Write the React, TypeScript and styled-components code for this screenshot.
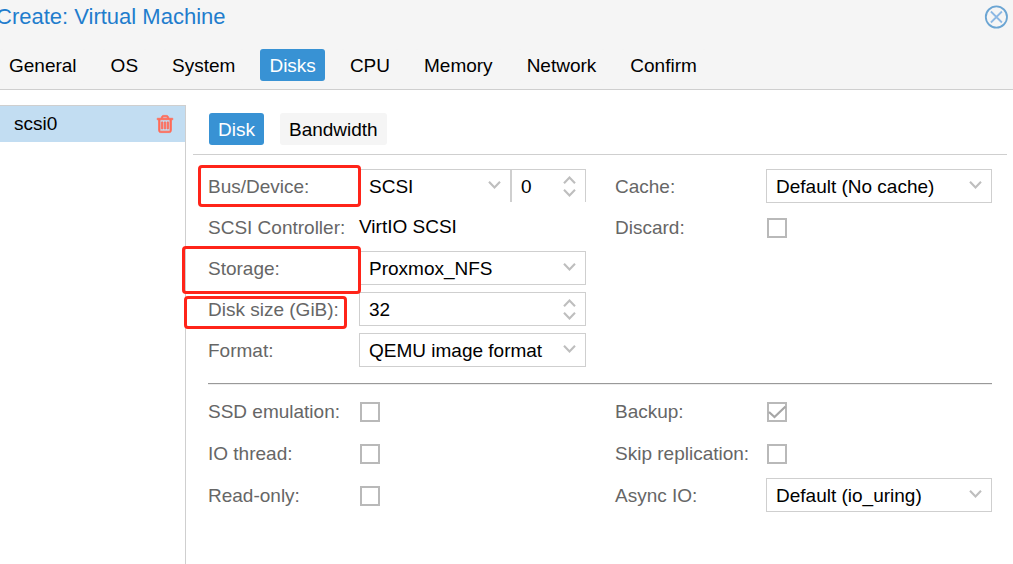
import React, { useState } from 'react';
import styled, { createGlobalStyle, css } from 'styled-components';

const GlobalStyle = createGlobalStyle`
  *, *::before, *::after { box-sizing: border-box; }
  html, body, #root { height: 100%; }
  body {
    margin: 0;
    background: #fff;
    color: #000;
    font: 19px/24px "Liberation Sans", Arial, sans-serif;
    overflow-x: hidden;
  }
  button, input, select { font: inherit; color: inherit; }
`;

const Dialog = styled.main`
  display: flex;
  flex-direction: column;
  min-height: 100%;
  overflow: hidden;
`;

const Header = styled.header`
  background: #f5f5f5;
  border-bottom: 1px solid #cfcfcf;
  padding-bottom: 8px;
`;

const TitleBar = styled.div`
  display: flex;
  align-items: center;
  justify-content: space-between;
  height: 33px;
  padding-right: 5px;
  margin-bottom: 16px;
`;

const Title = styled.h1`
  margin: 0 0 0 -4px;
  font-size: 22px;
  font-weight: 400;
  color: #1f7dcd;
  white-space: nowrap;
`;

const IconButton = styled.button`
  display: flex;
  padding: 0;
  border: 0;
  background: none;
  cursor: pointer;
`;

const TabBar = styled.nav<{ $nested?: boolean }>`
  display: flex;
  gap: 16px;
  ${(p) =>
    p.$nested &&
    css`
      padding: 8px 16px 9px;
      border-bottom: 1px solid #cfcfcf;
    `}
`;

const Tab = styled.button<{ $active?: boolean }>`
  height: 32px;
  padding: 2px 9px 0;
  border: 0;
  border-radius: 3px;
  white-space: nowrap;
  cursor: pointer;
  background: ${(p) => (p.$active ? '#3892d4' : '#f5f5f5')};
  color: ${(p) => (p.$active ? '#fff' : '#000')};
`;

const Body = styled.div`
  display: flex;
  flex: 1;
  padding-top: 15px;
`;

const DiskList = styled.ul`
  flex: 0 0 186px;
  margin: 0;
  padding: 0;
  list-style: none;
  border-top: 1px solid #cfcfcf;
  border-right: 1px solid #cfcfcf;
`;

const DiskItem = styled.li`
  display: flex;
  align-items: center;
  justify-content: space-between;
  height: 36px;
  padding: 0 10px 0 14px;
  background: #c2ddf2;
`;

const Pane = styled.section`
  flex: 1;
  min-width: 0;
  margin: 0 6px 0 7px;
`;

const Form = styled.form`
  padding: 14px 15px;
`;

const Columns = styled.div`
  display: grid;
  grid-template-columns: 378fr 377fr;
  gap: 29px;
`;

const Column = styled.div<{ $gap: number }>`
  display: flex;
  flex-direction: column;
  gap: ${(p) => p.$gap}px;
`;

const Row = styled.div`
  display: grid;
  grid-template-columns: 151px 1fr;
  height: 34px;
`;

const LabelCell = styled.div`
  position: relative;
  display: flex;
  align-items: center;
  padding-top: 2px;
  color: #666;
  white-space: nowrap;
`;

const Highlight = styled.span<{ $inset: string }>`
  position: absolute;
  z-index: 1;
  inset: ${(p) => p.$inset};
  border: 3px solid #ff2419;
  border-radius: 4px;
  pointer-events: none;
`;

const Value = styled.output`
  align-self: center;
`;

const Divider = styled.hr`
  height: 2px;
  margin: 16px 0 9px;
  border: 0;
  border-top: 1px solid #999;
  border-bottom: 1px solid #eee;
`;

const FieldBox = styled.div<{ $cut?: boolean }>`
  display: grid;
  grid-template-columns: 1fr 31px;
  min-width: 0;
  border: 1px solid #cfcfcf;
  background: #fff;
  ${(p) =>
    p.$cut &&
    css`
      border-bottom: 0;
      margin-bottom: 1px;
    `}
`;

const SplitField = styled.div`
  display: grid;
  grid-template-columns: 1fr 75px;
`;

const fieldText = css`
  appearance: none;
  min-width: 0;
  width: 100%;
  padding: 1px 0 0 9px;
  border: 0;
  border-radius: 0;
  outline: 0;
  background: transparent;
`;

const NativeSelect = styled.select`
  ${fieldText}
  grid-area: 1 / 1 / 2 / 3;
`;

const SelectArrow = styled.span`
  grid-area: 1 / 2;
  display: flex;
  align-items: center;
  justify-content: center;
  padding: 0 0 2px;
  pointer-events: none;
`;

const NumberInput = styled.input`
  ${fieldText}
  -moz-appearance: textfield;
  &::-webkit-inner-spin-button { appearance: none; margin: 0; }
`;

const Spinner = styled.div`
  display: flex;
  flex-direction: column;
  align-items: center;
  justify-content: center;
  gap: 5px;
`;

const CheckWrap = styled.span`
  display: grid;
  align-self: center;
  width: 20px;
  height: 20px;
  margin: 2px 0 0 1px;
  & > * { grid-area: 1 / 1; }
  & > svg { pointer-events: none; visibility: hidden; }
  & > input:checked + svg { visibility: visible; }
`;

const CheckInput = styled.input`
  appearance: none;
  width: 20px;
  height: 20px;
  margin: 0;
  border: 2px solid #b9b9b9;
  background: #fff;
`;

const Chevron = ({ up }: { up?: boolean }) => (
  <svg width="13" height="8" viewBox="0 0 13 8" fill="none" stroke="#bebebe" strokeWidth="2.1" aria-hidden="true">
    <path d={up ? 'M1 7.2l5.5-5.7L12 7.2' : 'M1 .8l5.5 5.7L12 .8'} />
  </svg>
);

const CloseIcon = () => (
  <svg width="24" height="24" viewBox="0 0 24 24" fill="none" aria-hidden="true">
    <circle cx="12.4" cy="12" r="10.6" stroke="#6ba5d3" strokeWidth="1.8" />
    <path d="M6.9 6.5l11 11M17.9 6.5l-11 11" stroke="#8cb8e4" strokeWidth="1.8" />
  </svg>
);

const TrashIcon = () => (
  <svg
    width="20"
    height="20"
    viewBox="0 0 1792 1792"
    fill="#ff6c59"
    stroke="#ff6c59"
    strokeWidth="70"
    aria-hidden="true"
  >
    <path d="M704 736v576q0 14-9 23t-23 9h-64q-14 0-23-9t-9-23v-576q0-14 9-23t23-9h64q14 0 23 9t9 23zm256 0v576q0 14-9 23t-23 9h-64q-14 0-23-9t-9-23v-576q0-14 9-23t23-9h64q14 0 23 9t9 23zm256 0v576q0 14-9 23t-23 9h-64q-14 0-23-9t-9-23v-576q0-14 9-23t23-9h64q14 0 23 9t9 23zm128 724v-948h-896v948q0 22 7 40.5t14.5 27 10.5 8.5h832q3 0 10.5-8.5t14.5-27 7-40.5zm-672-1076h448l-48-117q-7-9-17-11h-317q-10 2-17 11zm928 32v64q0 14-9 23t-23 9h-96v948q0 83-47 143.5t-113 60.5h-832q-66 0-113-58.5t-47-141.5v-952h-96q-14 0-23-9t-9-23v-64q0-14 9-23t23-9h309l70-167q15-37 54-63t79-26h320q40 0 79 26t54 63l70 167h309q14 0 23 9t9 23z" />
  </svg>
);

type FieldProps = { id: string; label: string; mark?: string; children: React.ReactNode };

const Field = ({ id, label, mark, children }: FieldProps) => (
  <Row>
    <LabelCell>
      <label htmlFor={id}>{label}</label>
      {mark && <Highlight $inset={mark} />}
    </LabelCell>
    {children}
  </Row>
);

const Select = ({ id, options, cut }: { id: string; options: string[]; cut?: boolean }) => (
  <FieldBox $cut={cut}>
    <NativeSelect id={id}>
      {options.map((o) => (
        <option key={o}>{o}</option>
      ))}
    </NativeSelect>
    <SelectArrow>
      <Chevron />
    </SelectArrow>
  </FieldBox>
);

const NumberField = ({ id, initial, cut, name }: { id: string; initial: number; cut?: boolean; name?: string }) => {
  const [value, setValue] = useState(initial);
  return (
    <FieldBox $cut={cut}>
      <NumberInput
        id={id}
        type="number"
        aria-label={name}
        min={0}
        value={value}
        onChange={(e) => setValue(Number(e.target.value))}
      />
      <Spinner>
        <IconButton type="button" aria-label="Increase" onClick={() => setValue(value + 1)}>
          <Chevron up />
        </IconButton>
        <IconButton type="button" aria-label="Decrease" onClick={() => setValue(Math.max(0, value - 1))}>
          <Chevron />
        </IconButton>
      </Spinner>
    </FieldBox>
  );
};

const Checkbox = ({ id, checked }: { id: string; checked?: boolean }) => (
  <CheckWrap>
    <CheckInput id={id} type="checkbox" defaultChecked={checked} />
    <svg width="20" height="20" viewBox="0 0 20 20" fill="none" stroke="#a6a6a6" strokeWidth="2.2" aria-hidden="true">
      <path d="M2 10l5.5 5L18.5 4.5" />
    </svg>
  </CheckWrap>
);

const STEPS = ['General', 'OS', 'System', 'Disks', 'CPU', 'Memory', 'Network', 'Confirm'];
const PANES = ['Disk', 'Bandwidth'];

export default function App() {
  const [step, setStep] = useState('Disks');
  const [pane, setPane] = useState('Disk');
  return (
    <>
      <GlobalStyle />
      <Dialog>
        <Header>
          <TitleBar>
            <Title>Create: Virtual Machine</Title>
            <IconButton type="button" aria-label="Close">
              <CloseIcon />
            </IconButton>
          </TitleBar>
          <TabBar>
            {STEPS.map((s) => (
              <Tab key={s} type="button" $active={s === step} onClick={() => setStep(s)}>
                {s}
              </Tab>
            ))}
          </TabBar>
        </Header>
        <Body>
          <DiskList>
            <DiskItem>
              scsi0
              <IconButton type="button" aria-label="Remove scsi0">
                <TrashIcon />
              </IconButton>
            </DiskItem>
          </DiskList>
          <Pane>
            <TabBar $nested>
              {PANES.map((s) => (
                <Tab key={s} type="button" $active={s === pane} onClick={() => setPane(s)}>
                  {s}
                </Tab>
              ))}
            </TabBar>
            <Form>
              <Columns>
                <Column $gap={7}>
                  <Field id="bus" label="Bus/Device:" mark="-4px -2px -4px -10px">
                    <SplitField>
                      <Select id="bus" options={['SCSI', 'SATA', 'IDE']} cut />
                      <NumberField id="device" name="Device number" initial={0} cut />
                    </SplitField>
                  </Field>
                  <Field id="controller" label="SCSI Controller:">
                    <Value id="controller">VirtIO SCSI</Value>
                  </Field>
                  <Field id="storage" label="Storage:" mark="-5px -2px -9px -26px">
                    <Select id="storage" options={['Proxmox_NFS']} />
                  </Field>
                  <Field id="size" label="Disk size (GiB):" mark="4px 12px -3px -24px">
                    <NumberField id="size" initial={32} />
                  </Field>
                  <Field id="format" label="Format:">
                    <Select id="format" options={['QEMU image format']} />
                  </Field>
                </Column>
                <Column $gap={7}>
                  <Field id="cache" label="Cache:">
                    <Select id="cache" options={['Default (No cache)']} />
                  </Field>
                  <Field id="discard" label="Discard:">
                    <Checkbox id="discard" />
                  </Field>
                </Column>
              </Columns>
              <Divider />
              <Columns>
                <Column $gap={8}>
                  <Field id="ssd" label="SSD emulation:">
                    <Checkbox id="ssd" />
                  </Field>
                  <Field id="iothread" label="IO thread:">
                    <Checkbox id="iothread" />
                  </Field>
                  <Field id="readonly" label="Read-only:">
                    <Checkbox id="readonly" />
                  </Field>
                </Column>
                <Column $gap={8}>
                  <Field id="backup" label="Backup:">
                    <Checkbox id="backup" checked />
                  </Field>
                  <Field id="replication" label="Skip replication:">
                    <Checkbox id="replication" />
                  </Field>
                  <Field id="async" label="Async IO:">
                    <Select id="async" options={['Default (io_uring)']} />
                  </Field>
                </Column>
              </Columns>
            </Form>
          </Pane>
        </Body>
      </Dialog>
    </>
  );
}
